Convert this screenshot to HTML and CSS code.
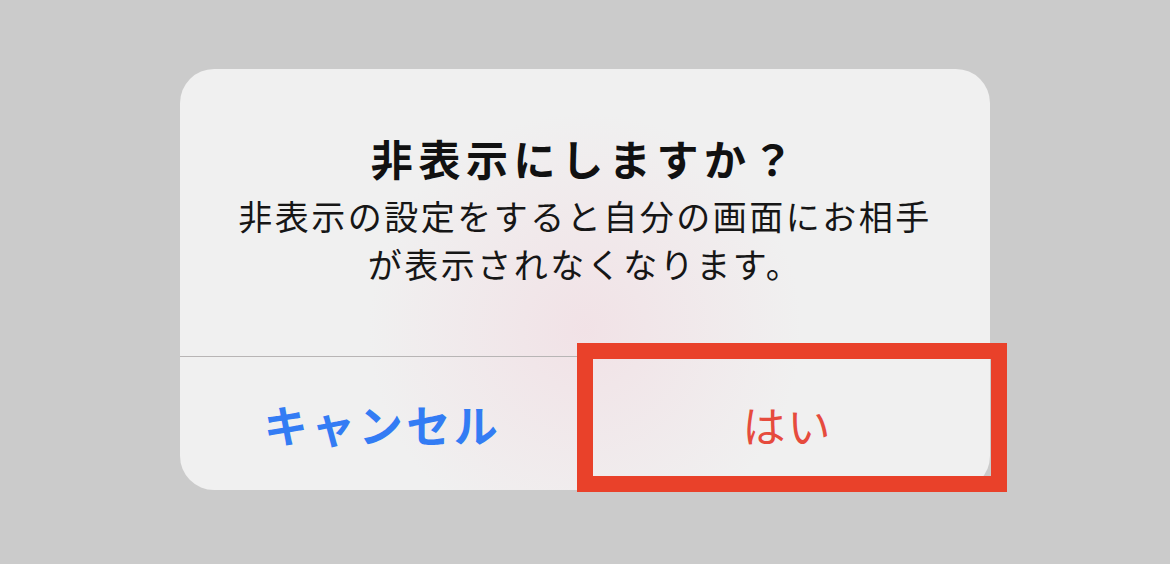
FILE: index.html
```html
<!DOCTYPE html>
<html lang="ja">
<head>
  <meta charset="UTF-8">
  <meta name="viewport" content="width=device-width, initial-scale=1.0">
  <title>非表示にしますか？</title>
  <link rel="stylesheet" href="styles.css">
</head>
<body>
  <div class="alert">
    <div class="alert-body">
      <div class="alert-title">非表示にしますか？</div>
      <div class="alert-text">
        非表示の設定をすると自分の画面にお相手<br>が表示されなくなります。
      </div>
    </div>
    <div class="alert-actions">
      <button class="action action-cancel">キャンセル</button>
      <button class="action action-ok">はい</button>
    </div>
    <div class="highlight"></div>
  </div>
</body>
</html>
```

FILE: styles.css
```css
body {
  margin: 0;
  padding: 69px 0 0 0;
  height: 564px;
  box-sizing: border-box;
  background-color: #cbcbcb;
  font-family: "Noto Sans CJK JP", "Noto Sans", sans-serif;
  display: flex;
  justify-content: center;
  align-items: flex-start;
}

.alert {
  position: relative;
  width: 810px;
  height: 421px;
  border-radius: 34px;
  background-color: #f0f0f0;
  background-image: radial-gradient(circle at 50% 62%, rgba(242, 220, 226, 0.7), rgba(240, 240, 240, 0) 45%);
  display: flex;
  flex-direction: column;
}

.alert-body {
  height: 288px;
  box-sizing: border-box;
  padding-top: 60px;
  text-align: center;
  border-bottom: 1px solid #b8b5b5;
}

.alert-title {
  font-size: 42px;
  line-height: 58px;
  font-weight: 700;
  letter-spacing: 5.6px;
  color: #111;
}

.alert-text {
  margin-top: 5px;
  font-size: 34px;
  line-height: 48px;
  letter-spacing: 2.5px;
  color: #161616;
}

.alert-actions {
  flex: 1;
  display: flex;
}

.action {
  flex: 1;
  border: 0;
  background: none;
  outline: none;
  padding: 0 0 0 0;
  font-family: "Noto Sans CJK JP", "Noto Sans", sans-serif;
}

.action-cancel {
  font-size: 44px;
  font-weight: 700;
  letter-spacing: 3.5px;
  color: #337cf4;
}

.action-ok {
  font-size: 43px;
  letter-spacing: 2px;
  color: #e64b3d;
}

.highlight {
  position: absolute;
  left: 397px;
  top: 274px;
  width: 430px;
  height: 149px;
  box-sizing: border-box;
  border: 16px solid #e9412a;
}
```
